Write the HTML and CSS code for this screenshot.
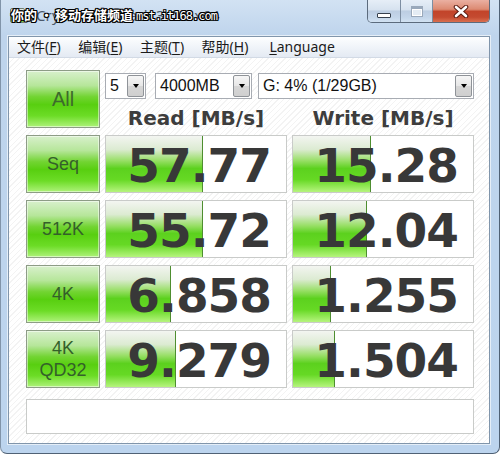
FILE: index.html
```html
<!DOCTYPE html>
<html lang="zh-CN">
<head>
<meta charset="utf-8">
<title>CrystalDiskMark</title>
<link rel="stylesheet" href="styles.css">
</head>
<body>
<div class="window">
  <div class="titlebar">
    <span class="app-icon"></span>
    <span class="title">CrystalDiskMark 3.0.2 x64</span>
    <span class="watermark">你的<span class="wm-dot">•</span>移动存储频道 <span class="wm-url">mst.it168.com</span></span>
    <div class="caption">
      <div class="cap-btn cap-min"><span class="min-glyph"></span></div>
      <div class="cap-btn cap-max"><span class="max-glyph"></span></div>
      <div class="cap-btn cap-close">
        <svg width="16" height="13" viewBox="0 0 16 13">
          <path d="M3 2 L13 11 M13 2 L3 11" stroke="#5b1c12" stroke-width="4.6" stroke-linecap="round"/>
          <path d="M3 2 L13 11 M13 2 L3 11" stroke="#ffffff" stroke-width="2.6" stroke-linecap="round"/>
        </svg>
      </div>
    </div>
  </div>
  <div class="client">
    <div class="menubar">
      <span class="menu-item">文件(<u>F</u>)</span>
      <span class="menu-item">编辑(<u>E</u>)</span>
      <span class="menu-item">主题(<u>T</u>)</span>
      <span class="menu-item">帮助(<u>H</u>)</span>
      <span class="menu-item menu-lang"><u>L</u>anguage</span>
    </div>
    <div class="content">
      <div class="test-btn test-all">All</div>
      <div class="controls">
        <div class="combos">
          <div class="combo combo-count"><span class="combo-text">5</span><span class="drop"></span></div>
          <div class="combo combo-size"><span class="combo-text">4000MB</span><span class="drop"></span></div>
          <div class="combo combo-drive"><span class="combo-text">G: 4% (1/29GB)</span><span class="drop"></span></div>
        </div>
        <div class="headers">
          <div class="header">Read [MB/s]</div>
          <div class="header">Write [MB/s]</div>
        </div>
      </div>

      <div class="test-btn">Seq</div>
      <div class="result" style="--w:97px">57.77</div>
      <div class="result" style="--w:78px">15.28</div>

      <div class="test-btn">512K</div>
      <div class="result" style="--w:97px">55.72</div>
      <div class="result" style="--w:74px">12.04</div>

      <div class="test-btn">4K</div>
      <div class="result" style="--w:65px">6.858</div>
      <div class="result" style="--w:38px">1.255</div>

      <div class="test-btn test-two">4K<br>QD32</div>
      <div class="result" style="--w:70px">9.279</div>
      <div class="result" style="--w:42px">1.504</div>

      <div class="status"></div>
    </div>
  </div>
</div>
</body>
</html>
```

FILE: styles.css
```css
* { box-sizing: border-box; }

html, body {
  margin: 0;
  padding: 0;
  background: #ffffff;
}

.window {
  width: 500px;
  height: 454px;
  display: flex;
  flex-direction: column;
  padding: 0 9px 9px 7px;
  background: linear-gradient(to bottom, #d2e2f3 0px, #bed4ec 36px, #bcd4ee 100%);
  border-left: 1px solid #8194a9;
  border-right: 1px solid #4f6175;
  border-bottom: 1px solid #4f6175;
  border-radius: 0 0 7px 7px;
}

/* ---------- title bar ---------- */
.titlebar {
  position: relative;
  height: 36px;
  flex: none;
  display: flex;
  align-items: center;
  padding-bottom: 6px;
}

.app-icon {
  width: 15px;
  height: 15px;
  margin-left: 2px;
  border-radius: 2px;
  border: 1px solid #6f7f70;
  background: linear-gradient(to bottom, #e8ece8 0%, #b8c4b8 45%, #5cc828 55%, #8fe050 100%);
}

.title {
  margin-left: 11px;
  font-family: "Noto Sans", sans-serif;
  font-size: 15px;
  letter-spacing: 0.1px;
  color: #4a586a;
}

.watermark {
  position: absolute;
  left: 3px;
  top: 6px;
  font-family: "Noto Sans CJK SC", sans-serif;
  font-weight: 700;
  font-size: 13px;
  line-height: 18px;
  color: #ffffff;
  text-shadow: 1px 0 0 #000, -1px 0 0 #000, 0 1px 0 #000, 0 -1px 0 #000,
               1px 1px 0 #000, -1px -1px 0 #000, 1px -1px 0 #000, -1px 1px 0 #000;
  white-space: nowrap;
}

.wm-dot {
  margin: 0 2px 0 3px;
}

.wm-url {
  font-family: "DejaVu Sans Mono", monospace;
  font-weight: 400;
  font-size: 12px;
  letter-spacing: -1px;
}

.caption {
  margin-left: auto;
  align-self: flex-start;
  display: flex;
  height: 23px;
  border: 1px solid #5c6b7d;
  border-top: none;
  border-radius: 0 0 5px 5px;
  overflow: hidden;
}

.cap-btn {
  height: 100%;
  display: flex;
  align-items: center;
  justify-content: center;
}

.cap-min, .cap-max {
  width: 33px;
  background: linear-gradient(to bottom, #e6eef7 0%, #d6e2ef 45%, #bccde2 50%, #c4d6ea 80%, #d2e2f2 100%);
  border-right: 1px solid #7d8ea2;
}

.cap-max { width: 32px; }

.min-glyph {
  width: 14px;
  height: 5px;
  margin-top: 9px;
  background: #ffffff;
  border: 1px solid #36404e;
  border-radius: 1px;
}

.max-glyph {
  width: 12px;
  height: 11px;
  margin-top: 1px;
  border: 1px solid #9aa9bb;
  border-top-width: 3px;
  background: #e4ecf4;
  box-shadow: inset 0 0 0 1px #ffffff;
}

.cap-close {
  width: 56px;
  background: linear-gradient(to bottom, #eab0a2 0%, #dc8a72 42%, #c2442a 52%, #c44a30 78%, #da7050 100%);
}

/* ---------- client ---------- */
.client {
  flex: 1;
  display: flex;
  flex-direction: column;
  border: 1px solid #8095ab;
  background: #ffffff;
  box-shadow: 0 0 0 1px rgba(255, 255, 255, 0.6);
}

.menubar {
  height: 21px;
  flex: none;
  display: flex;
  align-items: center;
  background: linear-gradient(to bottom, #fdfeff 0%, #f0f4f9 50%, #e4eaf3 100%);
  border-bottom: 1px solid #d2dae5;
  font-family: "Noto Sans", "Noto Sans CJK SC", sans-serif;
  font-size: 14px;
  color: #1b1b1b;
}

.menu-item {
  padding: 0 8px 0 8px;
  margin-right: 1px;
  line-height: 20px;
}

.menu-item u { text-decoration-thickness: 1px; text-underline-offset: 2px; }

.menu-item + .menu-item { margin-left: 0.5px; }

.menu-lang { margin-left: 4px !important; }

.content {
  flex: 1;
  display: grid;
  grid-template-columns: 74px 182px 182px;
  grid-template-rows: repeat(5, 58px) 39px;
  column-gap: 5px;
  row-gap: 7px;
  padding: 12px 15px 9px 17px;
  background: repeating-linear-gradient(135deg, #ffffff 0px, #ffffff 3px, #f3f3f3 3px, #f3f3f3 4px);
}

.test-btn {
  display: flex;
  align-items: center;
  justify-content: center;
  text-align: center;
  border: 1px solid #8d9c86;
  background: linear-gradient(to bottom, #d8f0cc 0%, #b6e69a 26%, #72d432 46%, #58cf10 60%, #6cdc26 80%, #aef27a 100%);
  box-shadow: inset 0 0 0 1px rgba(255, 255, 255, 0.5);
  font-family: "Liberation Sans", sans-serif;
  font-size: 18px;
  line-height: 22px;
  color: #34602a;
}

.test-all {
  font-size: 20px;
  color: #3d6a2c;
}

.controls {
  grid-column: 2 / 4;
  display: flex;
  flex-direction: column;
  justify-content: space-between;
}

.combos {
  display: flex;
  gap: 6px;
  margin-top: 3px;
  height: 26px;
}

.combo {
  height: 26px;
  display: flex;
  align-items: center;
  border: 1px solid #a8acb3;
  background: #ffffff;
  padding-left: 4px;
  font-family: "Liberation Sans", sans-serif;
  font-size: 16px;
  color: #111111;
}

.combo-count { width: 41px; margin-right: 3px; }
.combo-size { width: 97px; }
.combo-drive { width: 216px; }

.drop {
  margin-left: auto;
  margin-right: 1px;
  width: 17px;
  height: 22px;
  display: flex;
  align-items: center;
  justify-content: center;
  border: 1px solid #8f9398;
  border-radius: 2px;
  background: linear-gradient(to bottom, #f6f6f6 0%, #e6e6e6 50%, #d6d6d6 51%, #cfcfcf 100%);
}

.drop::after {
  content: "";
  width: 0;
  height: 0;
  border-left: 3.5px solid transparent;
  border-right: 3.5px solid transparent;
  border-top: 4px solid #000000;
}

.headers {
  display: grid;
  grid-template-columns: 182px 182px;
  column-gap: 5px;
}

.header {
  text-align: center;
  font-family: "DejaVu Sans", sans-serif;
  font-weight: 700;
  font-size: 20px;
  line-height: 20px;
  color: #3d3d3d;
}

.result {
  border: 1px solid #c9cbc9;
  background-color: #ffffff;
  background-image:
    linear-gradient(to right, transparent calc(var(--w) - 1px), #4e8e30 calc(var(--w) - 1px), #4e8e30 var(--w), transparent var(--w)),
    linear-gradient(to bottom, #f3f5f1 0%, #dcebd2 24%, #98df66 44%, #5cd11e 58%, #66d924 78%, #b6f47e 100%);
  background-size: 100% 100%, var(--w) 100%;
  background-repeat: no-repeat;
  text-align: right;
  padding: 3px 15px 0 0;
  font-family: "DejaVu Sans", sans-serif;
  font-weight: 700;
  font-size: 47px;
  line-height: 53px;
  letter-spacing: -1px;
  color: #383838;
}

.status {
  grid-column: 1 / 4;
  align-self: end;
  height: 35px;
  border: 1px solid #c9cbc9;
  background: #ffffff;
}
```
